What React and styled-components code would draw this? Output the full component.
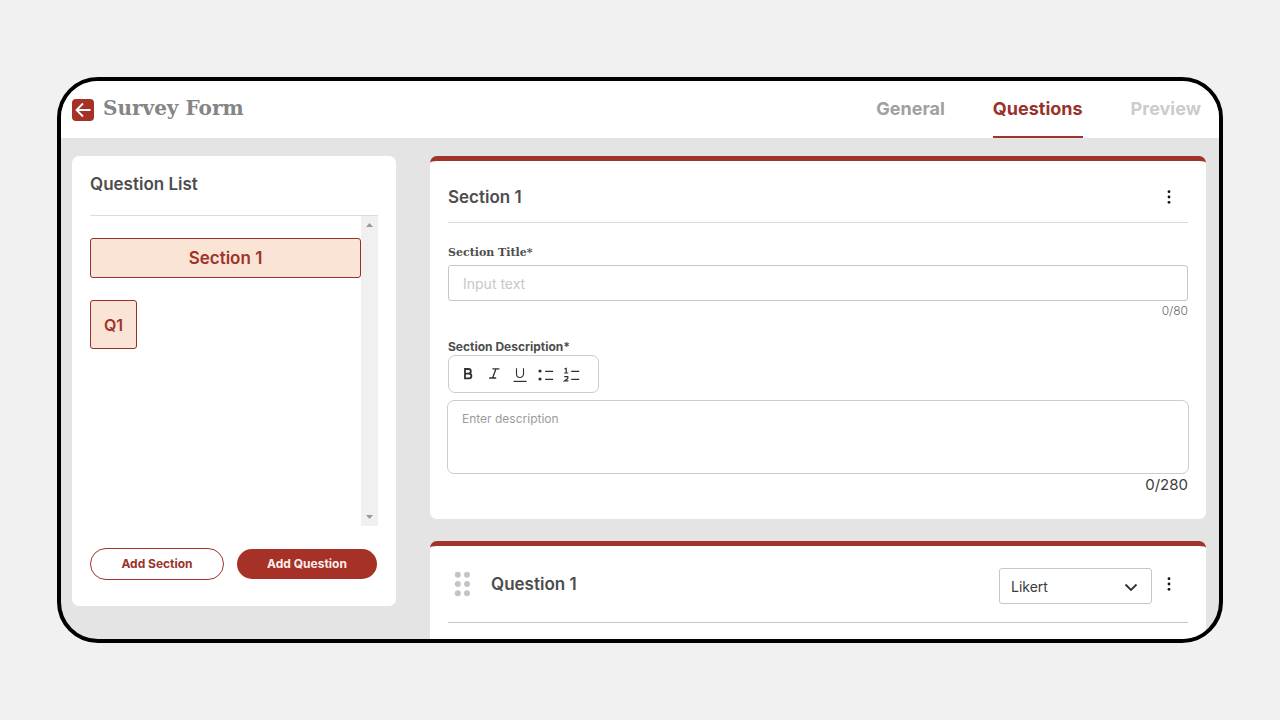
import { useState } from "react";
import styled, { createGlobalStyle } from "styled-components";

const GlobalStyle = createGlobalStyle`
  * {
    box-sizing: border-box;
  }
  body {
    margin: 0;
    background-color: #f1f1f1;
    color: #4d4d4d;
    font-family: Inter, "Liberation Sans", sans-serif;
  }
  button, input, select, textarea {
    font-family: inherit;
  }
`;

const Page = styled.div`
  height: 100vh;
  padding: 77px 57px;
`;

const Frame = styled.div`
  height: 100%;
  display: flex;
  flex-direction: column;
  overflow: hidden;
  border: 4px solid black;
  border-radius: 41px;
  background-color: #e4e4e4;
`;

const Header = styled.header`
  flex: none;
  height: 57px;
  padding: 0px 18px 0px 11px;
  display: flex;
  align-items: center;
  justify-content: space-between;
  background-color: white;
`;

const Brand = styled.div`
  display: flex;
  align-items: center;
  gap: 9px;
`;

const BackButton = styled.button`
  width: 22px;
  height: 22px;
  padding: 0px;
  display: flex;
  align-items: center;
  justify-content: center;
  border: none;
  border-radius: 4px;
  background-color: #a63127;
  cursor: pointer;
`;

const Title = styled.h1`
  margin: 0px;
  padding-bottom: 3px;
  color: #858585;
  font-family: "DejaVu Serif", serif;
  font-size: 20px;
  font-weight: 700;
  line-height: 28px;
`;

const Tabs = styled.nav`
  align-self: stretch;
  display: flex;
  gap: 48px;
`;

const Tab = styled.a`
  display: flex;
  align-items: center;
  border-bottom: 2px solid ${(props) => (props.$active ? "#a0332b" : "transparent")};
  color: ${(props) => props.$color};
  font-size: 18px;
  font-weight: 700;
  text-decoration: none;
`;

const Body = styled.div`
  flex: 1;
  min-height: 0;
  padding: 18px 13px 0px 11px;
  display: flex;
  align-items: flex-start;
  gap: 34px;
`;

const Sidebar = styled.aside`
  flex: none;
  width: 324px;
  padding: 18px 18px 26px;
  border-radius: 7px;
  background-color: white;
`;

const Heading = styled.h2`
  margin: 0px;
  color: #4d4d4d;
  font-size: 17px;
  font-weight: 600;
  line-height: 20px;
`;

const ListArea = styled.div`
  height: 311px;
  margin-top: 21px;
  display: flex;
  border-top: 1px solid #dcdcdc;
`;

const List = styled.div`
  flex: 1;
  padding-top: 22px;
  display: flex;
  flex-direction: column;
  align-items: flex-start;
  gap: 22px;
`;

const ListItem = styled.button`
  width: ${(props) => (props.$wide ? "100%" : "47px")};
  height: ${(props) => (props.$wide ? "40px" : "49px")};
  padding: 0px;
  border: 1px solid #98302a;
  border-radius: 3px;
  background-color: #fae4d5;
  color: #a0332b;
  font-size: ${(props) => (props.$wide ? "17px" : "16px")};
  font-weight: 600;
  cursor: pointer;
`;

const ScrollTrack = styled.div`
  width: 17px;
  padding: 7px 0px;
  display: flex;
  flex-direction: column;
  align-items: center;
  justify-content: space-between;
  background-color: #f0f0f0;
`;

const Actions = styled.div`
  margin-top: 22px;
  padding-right: 1px;
  display: flex;
  align-items: center;
  gap: 13px;
`;

const ActionButton = styled.button`
  flex: ${(props) => (props.$filled ? "1" : "0 0 134px")};
  height: ${(props) => (props.$filled ? "30px" : "32px")};
  padding: 0px 0px 2px;
  border: ${(props) => (props.$filled ? "none" : "1px solid #a0332b")};
  border-radius: 16px;
  background-color: ${(props) => (props.$filled ? "#a63127" : "white")};
  color: ${(props) => (props.$filled ? "#fdeeea" : "#98332b")};
  font-size: 12px;
  font-weight: 700;
  cursor: pointer;
`;

const Main = styled.main`
  flex: 1;
  min-width: 0;
  display: flex;
  flex-direction: column;
  gap: 22px;
`;

const Card = styled.section`
  padding: 0px 18px 24px;
  border-top: 5px solid #a0332b;
  border-radius: 7px;
  background-color: white;
`;

const CardHeader = styled.div`
  height: ${(props) => (props.$tall ? "77px" : "62px")};
  padding: ${(props) => (props.$tall ? "0px 10px 0px 6px" : "11px 10px 0px 0px")};
  display: flex;
  align-items: center;
  gap: 8px;
  border-bottom: 1px solid ${(props) => (props.$tall ? "#c6c6c6" : "#dcdcdc")};
`;

const CardTitle = styled(Heading)`
  flex: 1;
  padding-left: ${(props) => (props.$indent ? "12px" : "0px")};
`;

const IconButton = styled.button`
  width: ${(props) => props.$width || "18px"};
  height: 26px;
  padding: 0px;
  display: flex;
  align-items: center;
  justify-content: center;
  border: none;
  background: none;
  cursor: pointer;
`;

const Field = styled.div`
  margin-top: ${(props) => props.$top};
  display: flex;
  flex-direction: column;
  align-items: flex-start;
`;

const Label = styled.label`
  color: #4d4d4d;
  font-family: ${(props) => (props.$serif ? '"DejaVu Serif", serif' : "inherit")};
  font-size: ${(props) => (props.$serif ? "11px" : "12px")};
  font-weight: 700;
  line-height: 16px;
`;

const TextInput = styled.input`
  width: 100%;
  height: 36px;
  margin-top: 4px;
  padding: 0px 14px;
  border: 1px solid #c6c6c6;
  border-radius: 3px;
  outline: none;
  color: #4d4d4d;
  font-size: 14px;

  &::placeholder {
    color: #c8c8c8;
  }
`;

const Counter = styled.span`
  align-self: flex-end;
  color: ${(props) => (props.$large ? "#3c3c3c" : "#6a6a6a")};
  font-size: ${(props) => (props.$large ? "15px" : "12px")};
  font-weight: ${(props) => (props.$large ? 400 : 300)};
  line-height: 20px;
`;

const Toolbar = styled.div`
  height: 38px;
  padding: 0px 13px 0px 6px;
  display: flex;
  align-items: center;
  border: 1px solid #cccccc;
  border-radius: 7px;
`;

const TextArea = styled.textarea`
  align-self: stretch;
  height: 74px;
  margin: 7px -1px 1px;
  padding: 10px 14px;
  border: 1px solid #cccccc;
  border-radius: 7px;
  outline: none;
  resize: none;
  color: #4d4d4d;
  font-size: 12px;
  line-height: 16px;

  &::placeholder {
    color: #9b9b9b;
  }
`;

const SelectWrap = styled.div`
  position: relative;
  width: 153px;
  height: 36px;
  margin-top: 4px;

  svg {
    position: absolute;
    top: 14px;
    right: 14px;
    pointer-events: none;
  }
`;

const Select = styled.select`
  width: 100%;
  height: 100%;
  padding: 0px 11px;
  appearance: none;
  border: 1px solid #c6c6c6;
  border-radius: 3px;
  background-color: white;
  color: #3c3c3c;
  font-size: 14px;
`;

const MoreIcon = () => (
  <svg width="4" height="14" viewBox="0 0 4 14" fill="#111">
    <circle cx="2" cy="1.7" r="1.4" />
    <circle cx="2" cy="7" r="1.4" />
    <circle cx="2" cy="12.3" r="1.4" />
  </svg>
);

const GripIcon = () => (
  <svg width="17" height="26" viewBox="0 0 17 26" fill="#c4c4c4">
    {[3.8, 13].map((x) =>
      [3.7, 13, 22.3].map((y) => <circle key={`${x}-${y}`} cx={x} cy={y} r="3" />)
    )}
  </svg>
);

const toolIcons = [
  {
    name: "Bold",
    icon: <path d="M6 4H9.5a2.3 2.3 0 0 1 0 4.6H6zM6 8.6H10a2.4 2.4 0 0 1 0 4.8H6z" strokeWidth="1.8" />,
  },
  {
    name: "Italic",
    icon: <path d="M7.4 3.8h7M4.2 13h7M11 3.8L7.6 13" strokeWidth="1.3" />,
  },
  {
    name: "Underline",
    icon: (
      <>
        <path d="M5.5 3.2v5.8a3.5 3.5 0 0 0 7 0V3.2" strokeWidth="1.1" />
        <path d="M2.5 16.4h13" strokeWidth="1.2" />
      </>
    ),
  },
  {
    name: "Bulleted list",
    icon: (
      <>
        <path d="M8.2 6.4h8M8.2 14.4h8" strokeWidth="1.2" />
        <circle cx="3" cy="6" r="1.6" fill="#2f2f2f" stroke="none" />
        <circle cx="3" cy="14" r="1.6" fill="#2f2f2f" stroke="none" />
      </>
    ),
  },
  {
    name: "Numbered list",
    icon: (
      <>
        <path d="M8.2 6.4h8M8.2 14.4h8" strokeWidth="1.2" />
        <path d="M1.4 4L3.2 3.4V8M1.2 8h4" strokeWidth="1.2" />
        <path d="M1.2 11.6h3.6v1.8l-3.2 2.4h3.8" strokeWidth="1.2" />
      </>
    ),
  },
];

const tabs = [
  { name: "General", color: "#a0a0a0" },
  { name: "Questions", color: "#98332b" },
  { name: "Preview", color: "#cccccc" },
];

const App = () => {
  const [title, setTitle] = useState("");
  const [description, setDescription] = useState("");
  const [type, setType] = useState("Likert");

  return (
    <Page>
      <GlobalStyle />
      <Frame>
        <Header>
          <Brand>
            <BackButton aria-label="Back">
              <svg width="18" height="18" viewBox="0 0 18 18" fill="none" stroke="white" strokeWidth="1.8">
                <path d="M16.5 9H2.5M9 2.5L2.5 9L9 15.5" />
              </svg>
            </BackButton>
            <Title>Survey Form</Title>
          </Brand>
          <Tabs>
            {tabs.map((tab) => (
              <Tab
                href={`#${tab.name.toLowerCase()}`}
                key={tab.name}
                $color={tab.color}
                $active={tab.name === "Questions"}
              >
                {tab.name}
              </Tab>
            ))}
          </Tabs>
        </Header>
        <Body>
          <Sidebar>
            <Heading>Question List</Heading>
            <ListArea>
              <List>
                <ListItem $wide>Section 1</ListItem>
                <ListItem>Q1</ListItem>
              </List>
              <ScrollTrack>
                <svg width="7" height="4" viewBox="0 0 7 4" fill="#9a9a9a">
                  <path d="M0 4L3.5 0L7 4z" />
                </svg>
                <svg width="7" height="4" viewBox="0 0 7 4" fill="#9a9a9a">
                  <path d="M0 0L3.5 4L7 0z" />
                </svg>
              </ScrollTrack>
            </ListArea>
            <Actions>
              <ActionButton>Add Section</ActionButton>
              <ActionButton $filled>Add Question</ActionButton>
            </Actions>
          </Sidebar>
          <Main>
            <Card>
              <CardHeader>
                <CardTitle>Section 1</CardTitle>
                <IconButton aria-label="Section options">
                  <MoreIcon />
                </IconButton>
              </CardHeader>
              <Field $top="22px">
                <Label htmlFor="section-title" $serif>
                  Section Title*
                </Label>
                <TextInput
                  id="section-title"
                  placeholder="Input text"
                  maxLength={80}
                  value={title}
                  onChange={(e) => setTitle(e.target.value)}
                />
                <Counter>{title.length}/80</Counter>
              </Field>
              <Field $top="18px">
                <Label htmlFor="section-description">Section Description*</Label>
                <Toolbar>
                  {toolIcons.map((tool) => (
                    <IconButton key={tool.name} aria-label={tool.name} $width="26px">
                      <svg width="18" height="18" viewBox="0 0 18 18" fill="none" stroke="#2f2f2f">
                        {tool.icon}
                      </svg>
                    </IconButton>
                  ))}
                </Toolbar>
                <TextArea
                  id="section-description"
                  placeholder="Enter description"
                  maxLength={280}
                  value={description}
                  onChange={(e) => setDescription(e.target.value)}
                />
                <Counter $large>{description.length}/280</Counter>
              </Field>
            </Card>
            <Card>
              <CardHeader $tall>
                <GripIcon />
                <CardTitle $indent>Question 1</CardTitle>
                <SelectWrap>
                  <Select
                    aria-label="Question type"
                    value={type}
                    onChange={(e) => setType(e.target.value)}
                  >
                    <option>Likert</option>
                  </Select>
                  <svg width="14" height="10" viewBox="0 0 14 10" fill="none" stroke="#2f2f2f" strokeWidth="1.8">
                    <path d="M1.5 2.5L7 8L12.5 2.5" />
                  </svg>
                </SelectWrap>
                <IconButton aria-label="Question options">
                  <MoreIcon />
                </IconButton>
              </CardHeader>
            </Card>
          </Main>
        </Body>
      </Frame>
    </Page>
  );
};

export default App;
